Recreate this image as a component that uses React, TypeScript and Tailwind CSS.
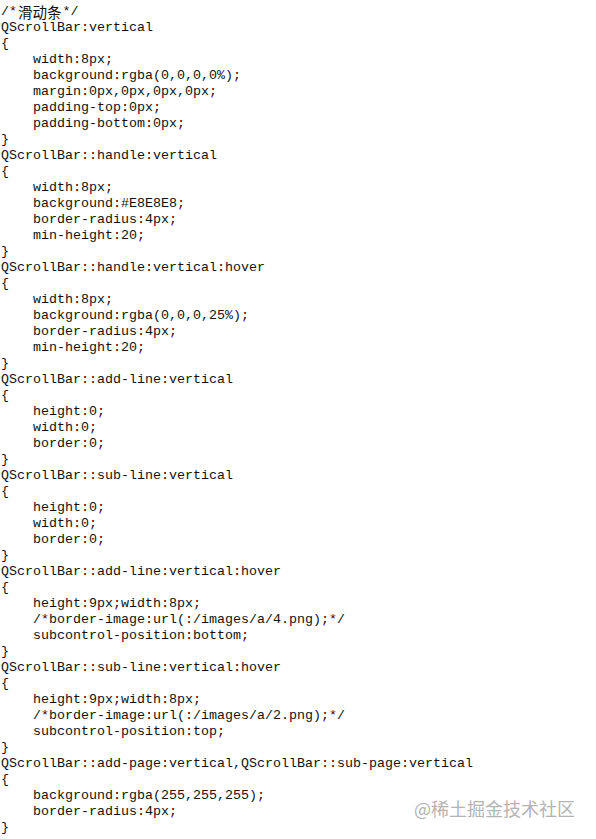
import React from "react";

const lines: string[] = [
  "/*滑动条*/",
  "QScrollBar:vertical",
  "{",
  "    width:8px;",
  "    background:rgba(0,0,0,0%);",
  "    margin:0px,0px,0px,0px;",
  "    padding-top:0px;",
  "    padding-bottom:0px;",
  "}",
  "QScrollBar::handle:vertical",
  "{",
  "    width:8px;",
  "    background:#E8E8E8;",
  "    border-radius:4px;",
  "    min-height:20;",
  "}",
  "QScrollBar::handle:vertical:hover",
  "{",
  "    width:8px;",
  "    background:rgba(0,0,0,25%);",
  "    border-radius:4px;",
  "    min-height:20;",
  "}",
  "QScrollBar::add-line:vertical",
  "{",
  "    height:0;",
  "    width:0;",
  "    border:0;",
  "}",
  "QScrollBar::sub-line:vertical",
  "{",
  "    height:0;",
  "    width:0;",
  "    border:0;",
  "}",
  "QScrollBar::add-line:vertical:hover",
  "{",
  "    height:9px;width:8px;",
  "    /*border-image:url(:/images/a/4.png);*/",
  "    subcontrol-position:bottom;",
  "}",
  "QScrollBar::sub-line:vertical:hover",
  "{",
  "    height:9px;width:8px;",
  "    /*border-image:url(:/images/a/2.png);*/",
  "    subcontrol-position:top;",
  "}",
  "QScrollBar::add-page:vertical,QScrollBar::sub-page:vertical",
  "{",
  "    background:rgba(255,255,255);",
  "    border-radius:4px;",
  "}",
];

function Line({ text }: { text: string }) {
  if (text === "/*滑动条*/") {
    return (
      <div className="flex h-4 items-center whitespace-pre">
        <span>/*</span>
        <span className="px-[1px] text-[14.5px] leading-4 [font-family:'Noto_Sans_CJK_SC',sans-serif]">滑动条</span>
        <span>*/</span>
      </div>
    );
  }
  return <div className="h-4 whitespace-pre">{text}</div>;
}

export default function App() {
  return (
    <div className="relative h-[839px] w-[596px] overflow-hidden bg-white">
      <div className="pl-[1px] pt-[4px] text-[13.33px] leading-4 text-[#111] [font-family:'Liberation_Mono',monospace]">
        {lines.map((l, i) => (
          <Line key={i} text={l} />
        ))}
      </div>
      <div className="absolute left-[414px] top-[796px] text-[18px] leading-6 text-[#b4b4b4] [font-family:'Noto_Sans_CJK_SC',sans-serif]">
        @稀土掘金技术社区
      </div>
    </div>
  );
}
